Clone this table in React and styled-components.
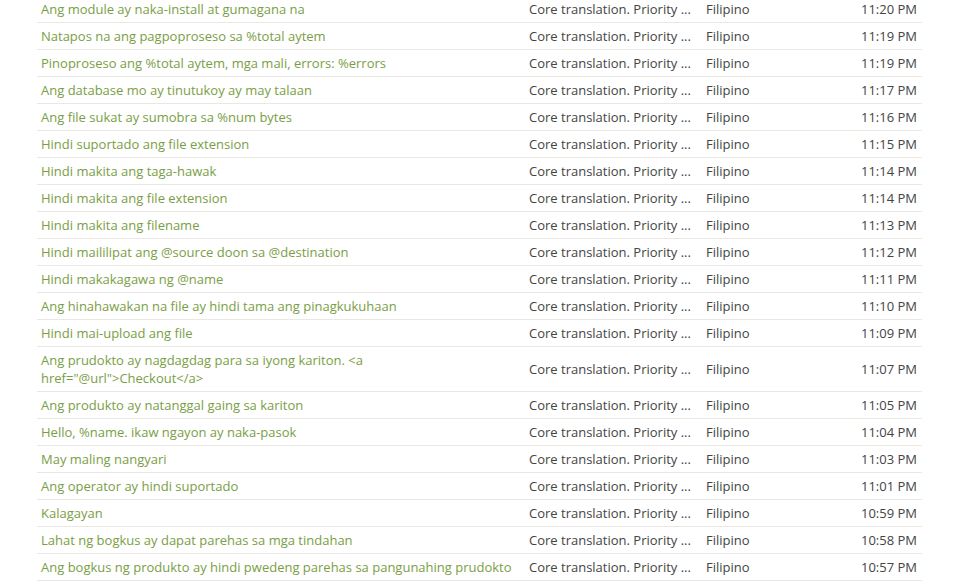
import React from 'react'
import styled, { createGlobalStyle } from 'styled-components'

const Global = createGlobalStyle`
  html, body {
    margin: 0;
    padding: 0;
    background: #fff;
    overflow: hidden;
  }
  body {
    font-family: "Open Sans", "Noto Sans", sans-serif;
    font-size: 13px;
    color: #444;
  }
`

const rows = [
  ['Ang module ay naka-install at gumagana na', '11:20 PM'],
  ['Natapos na ang pagpoproseso sa %total aytem', '11:19 PM'],
  ['Pinoproseso ang %total aytem, mga mali, errors: %errors', '11:19 PM'],
  ['Ang database mo ay tinutukoy ay may talaan', '11:17 PM'],
  ['Ang file sukat ay sumobra sa %num bytes', '11:16 PM'],
  ['Hindi suportado ang file extension', '11:15 PM'],
  ['Hindi makita ang taga-hawak', '11:14 PM'],
  ['Hindi makita ang file extension', '11:14 PM'],
  ['Hindi makita ang filename', '11:13 PM'],
  ['Hindi maililipat ang @source doon sa @destination', '11:12 PM'],
  ['Hindi makakagawa ng @name', '11:11 PM'],
  ['Ang hinahawakan na file ay hindi tama ang pinagkukuhaan', '11:10 PM'],
  ['Hindi mai-upload ang file', '11:09 PM'],
  ['Ang prudokto ay nagdagdag para sa iyong kariton. <a href="@url">Checkout</a>', '11:07 PM'],
  ['Ang produkto ay natanggal gaing sa kariton', '11:05 PM'],
  ['Hello, %name. ikaw ngayon ay naka-pasok', '11:04 PM'],
  ['May maling nangyari', '11:03 PM'],
  ['Ang operator ay hindi suportado', '11:01 PM'],
  ['Kalagayan', '10:59 PM'],
  ['Lahat ng bogkus ay dapat parehas sa mga tindahan', '10:58 PM'],
  ['Ang bogkus ng produkto ay hindi pwedeng parehas sa pangunahing prudokto', '10:57 PM'],
]

export default function App() {
  return (
    <>
      <Global />
      <Page>
        <Table>
          <colgroup>
            <col style={{ width: 488 }} />
            <col style={{ width: 177 }} />
            <col style={{ width: 110 }} />
            <col />
          </colgroup>
          <tbody>
            {rows.map(([text, time], i) => (
              <Row key={i}>
                <Cell>
                  <StringLink href="#">{text}</StringLink>
                </Cell>
                <Cell>Core translation. Priority ...</Cell>
                <Cell>Filipino</Cell>
                <Cell align="right">{time}</Cell>
              </Row>
            ))}
          </tbody>
        </Table>
      </Page>
    </>
  )
}

const Page = styled.div`
  padding: 0 36px 0 37px;
  margin-top: -4px;
`

const Table = styled.table`
  width: 885px;
  border-collapse: collapse;
  table-layout: fixed;
`

const Row = styled.tr`
  border-bottom: 1px solid #e9e8e3;
`

const Cell = styled.td`
  padding: 4px 5px 4px 4px;
  line-height: 18px;
  vertical-align: middle;
  text-align: ${p => p.align || 'left'};
  white-space: normal;
`

const StringLink = styled.a`
  color: #7a9e45;
  text-decoration: none;
`
